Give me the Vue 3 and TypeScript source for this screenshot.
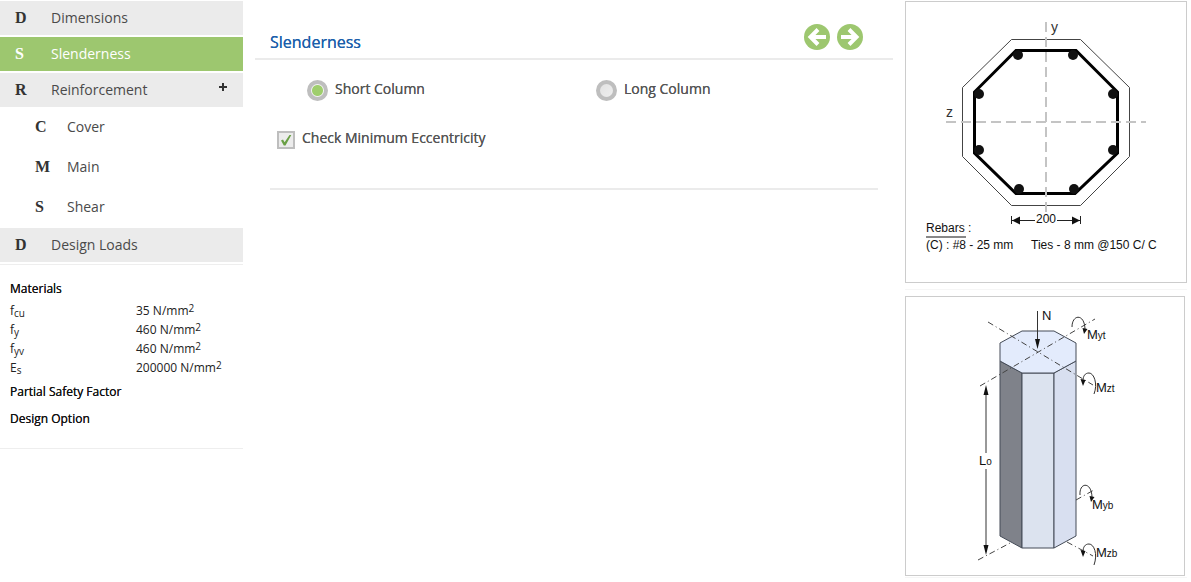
<script setup lang="ts">
import { ref } from 'vue'

interface NavItem {
  key: string
  letter: string
  label: string
  children?: { letter: string; label: string }[]
}

const active = ref('slenderness')
const columnType = ref<'short' | 'long'>('short')
const checkEccentricity = ref(true)
const expanded = ref(true)

const nav: NavItem[] = [
  { key: 'dimensions', letter: 'D', label: 'Dimensions' },
  { key: 'slenderness', letter: 'S', label: 'Slenderness' },
  {
    key: 'reinforcement',
    letter: 'R',
    label: 'Reinforcement',
    children: [
      { letter: 'C', label: 'Cover' },
      { letter: 'M', label: 'Main' },
      { letter: 'S', label: 'Shear' },
    ],
  },
  { key: 'loads', letter: 'D', label: 'Design Loads' },
]

const materials = [
  { symbol: 'f', sub: 'cu', value: 35 },
  { symbol: 'f', sub: 'y', value: 460 },
  { symbol: 'f', sub: 'yv', value: 460 },
  { symbol: 'E', sub: 's', value: 200000 },
]

const rebars = [
  [112, 53], [167, 53], [207, 92], [207, 148],
  [168, 187], [113, 187], [73, 148], [73, 92],
]

function select(item: NavItem) {
  if (item.children) expanded.value = !expanded.value
  else active.value = item.key
}
</script>

<template>
  <div class="page">
    <aside class="sidebar">
      <nav>
        <ul class="nav">
          <li v-for="item in nav" :key="item.key">
            <a
              href="#"
              class="nav-link"
              :class="{ active: active === item.key }"
              @click.prevent="select(item)"
            >
              <span class="letter">{{ item.letter }}</span>
              <span class="label">{{ item.label }}</span>
              <svg v-if="item.children" class="plus" viewBox="0 0 8 8" aria-hidden="true">
                <path d="M4 0V8M0 4H8" />
              </svg>
            </a>
            <ul v-if="item.children && expanded" class="subnav">
              <li v-for="child in item.children" :key="child.label">
                <a href="#" class="sub-link" @click.prevent>
                  <span class="letter">{{ child.letter }}</span>
                  <span class="label">{{ child.label }}</span>
                </a>
              </li>
            </ul>
          </li>
        </ul>
      </nav>
      <section class="summary">
        <h2>Materials</h2>
        <table>
          <tbody>
            <tr v-for="m in materials" :key="m.sub">
              <th scope="row">{{ m.symbol }}<sub>{{ m.sub }}</sub></th>
              <td>{{ m.value }} N/mm<sup>2</sup></td>
            </tr>
          </tbody>
        </table>
        <h2>Partial Safety Factor</h2>
        <h2>Design Option</h2>
      </section>
    </aside>

    <main class="content">
      <header class="title-bar">
        <h1>Slenderness</h1>
        <div class="pager">
          <button type="button" aria-label="Previous">
            <svg viewBox="0 0 26 26" aria-hidden="true">
              <circle cx="13" cy="13" r="13" />
              <path d="M22 13H8M14 5.500L6.500 13L14 20.500" />
            </svg>
          </button>
          <button type="button" aria-label="Next">
            <svg viewBox="0 0 26 26" aria-hidden="true">
              <circle cx="13" cy="13" r="13" />
              <path d="M4 13H18M12 5.500L19.500 13L12 20.500" />
            </svg>
          </button>
        </div>
      </header>
      <form class="options" @submit.prevent>
        <div class="radios">
          <label>
            <input v-model="columnType" type="radio" name="column" value="short" />
            <span class="caption">Short Column</span>
          </label>
          <label>
            <input v-model="columnType" type="radio" name="column" value="long" />
            <span class="caption">Long Column</span>
          </label>
        </div>
        <label class="check">
          <span class="box">
            <input v-model="checkEccentricity" type="checkbox" />
            <svg v-if="checkEccentricity" viewBox="0 0 12 12" aria-hidden="true">
              <path d="M1 6.500L3 5.500L4.600 8.300L9.500 1L11.300 1L5.500 11.500L3.800 11.500Z" />
            </svg>
          </span>
          <span class="caption">Check Minimum Eccentricity</span>
        </label>
      </form>
    </main>

    <aside class="figures">
      <div class="figure-row">
        <figure>
          <svg viewBox="0 0 280 280" role="img" aria-label="Column cross section">
            <polygon
              class="outline"
              points="105.5,37.5 174.5,37.5 223.5,85.5 223.5,154.5 174.5,203.5 105.5,203.5 56.5,154.5 56.5,85.5"
            />
            <polygon
              class="tie"
              points="110,48.500 170,48.500 211.5,90 211.5,151 169,191.500 110,191.500 68.5,151 68.5,90"
            />
            <circle v-for="([x, y], i) in rebars" :key="i" :cx="x" :cy="y" r="5" />
            <path class="axis" d="M140 20V212M40 120H240" />
            <text x="145" y="30" class="axis-name">y</text>
            <text x="40" y="115" class="axis-name">z</text>
            <path class="dim" d="M105.5 214V222M174.500 214V222M106 218.500H129M151 218.500H174" />
            <path d="M106 218.500L114 214.500V222.500ZM174 218.500L166 214.500V222.500Z" />
            <text x="130" y="221">200</text>
            <text x="20" y="230">Rebars :</text>
            <path class="underline" d="M20 235H60" />
            <text x="20" y="247">(C) : #8 - 25 mm</text>
            <text x="125" y="247">Ties - 8 mm @150 C/ C</text>
          </svg>
        </figure>
      </div>
      <div class="figure-row column-row">
        <figure>
          <svg viewBox="0 0 278 278" role="img" aria-label="Column axes and moments">
            <polygon class="face dark" points="94,64 116,76 116,251 94,239" />
            <polygon class="face front" points="116,76 148,76 148,251 116,251" />
            <polygon class="face side" points="148,76 170,64 170,239 148,251" />
            <polygon
              class="face top"
              points="116,34 148,34 170,46 170,64 148,76 116,76 94,64 94,46"
            />
            <path
              class="centre"
              d="M82 25L187 88M74 89L189 22M72 263L106 245M161 245L187 259M170 203L188 193"
            />
            <path class="line" d="M131.500 14V44M80 96V156M80 172V250" />
            <path d="M131.500 52L129 42H134ZM80 88L77.500 98H82.500ZM80 258L77.500 248H82.500Z" />
            <path
              class="line"
              d="M166 30C166 17 179 16 179 33M188 97C192 87 188 76 183 76C179 76 177 79 177 84M174 198C173 185 186 184 186 201M188 268C192 257 188 247 183 247C179 247 177 250 177 255"
            />
            <path
              d="M176.500 31L181.500 32L178 37ZM174.500 82L179.500 83L177 89ZM183.500 199L188.500 200L185 205ZM174.500 253L179.500 254L177 260Z"
            />
            <text x="136" y="23" class="force">N</text>
            <text x="73" y="168">L<tspan class="index">o</tspan></text>
            <text x="181" y="42">M<tspan class="index">yt</tspan></text>
            <text x="190" y="95">M<tspan class="index">zt</tspan></text>
            <text x="186" y="212">M<tspan class="index">yb</tspan></text>
            <text x="190" y="260">M<tspan class="index">zb</tspan></text>
          </svg>
        </figure>
      </div>
    </aside>
  </div>
</template>

<style>
body {
  margin: 0;
  background: #fff;
}
</style>

<style scoped>
.page {
  display: grid;
  grid-template-columns: 243px minmax(0, 1fr) 282px;
  column-gap: 12px;
  align-items: start;
  padding: 1px 4px 0 0;
  font-family: "Open Sans", sans-serif;
  font-size: 14px;
  color: #444;
}
ul {
  list-style: none;
  margin: 0;
  padding: 0;
}
a {
  color: #4a4a4a;
  text-decoration: none;
}
.letter {
  font: bold 16px "Liberation Serif", serif;
  color: #333;
}
.nav {
  display: grid;
  gap: 2px;
}
.nav-link {
  display: flex;
  align-items: center;
  height: 34px;
  padding: 0 16px 0 15px;
  background: #ebebeb;
}
.nav-link .letter {
  width: 36px;
}
.label {
  flex: 1;
  padding-bottom: 2px;
}
.nav-link.active {
  background: #9dc76f;
}
.active .letter,
.active .label {
  color: #fff;
}
.plus {
  width: 8px;
  height: 8px;
  margin-bottom: 6px;
  fill: none;
  stroke: #333;
  stroke-width: 2;
}
.subnav {
  display: grid;
  margin-bottom: -1px;
}
.sub-link {
  display: flex;
  align-items: center;
  height: 40px;
  padding-left: 35px;
}
.sub-link .letter {
  width: 32px;
}
.summary {
  margin-top: 2px;
  padding: 16px 10px 21px;
  border-top: 1px solid #eee;
  border-bottom: 1px solid #eee;
  font-size: 12px;
  color: #222;
}
.summary h2 {
  margin: 0 0 11px;
  font-size: 12px;
  line-height: 16px;
  font-weight: 400;
  color: #111;
  text-shadow: 0 0 0 currentColor;
}
.summary h2:first-child {
  margin-bottom: 4px;
}
.summary h2:last-child {
  margin-bottom: 0;
}
table {
  width: 100%;
  margin-bottom: 7px;
  border-collapse: collapse;
  table-layout: fixed;
}
th,
td {
  height: 19px;
  padding: 0;
  line-height: 19px;
  font-weight: 400;
  text-align: left;
}
th {
  width: 126px;
}
td {
  white-space: nowrap;
}
sub,
sup {
  font-size: 10px;
  line-height: 0;
}
sup {
  vertical-align: 3px;
}
sub {
  vertical-align: -2px;
}
.title-bar {
  display: flex;
  align-items: center;
  justify-content: space-between;
  height: 57px;
  padding: 0 30px 0 15px;
  border-bottom: 2px solid #ebebeb;
}
h1 {
  margin: 24px 0 0;
  font-size: 16px;
  line-height: 22px;
  font-weight: 400;
  color: #1b5fab;
  text-shadow: 0 0 0 currentColor;
}
.pager {
  display: flex;
  gap: 7px;
  margin-top: 15px;
}
.pager button {
  width: 26px;
  height: 26px;
  padding: 0;
  border: 0;
  background: none;
  cursor: pointer;
}
.pager svg {
  display: block;
}
.pager circle {
  fill: #9dc76f;
}
.pager path {
  fill: none;
  stroke: #fff;
  stroke-width: 4;
}
.options {
  margin: 0 15px;
  padding: 20px 0 38px;
  border-bottom: 2px solid #ebebeb;
  color: #555;
}
.radios {
  display: grid;
  grid-template-columns: 289px 1fr;
  margin-left: 37px;
}
label {
  display: flex;
  align-items: center;
  line-height: 18px;
}
.caption {
  padding-bottom: 3px;
  text-shadow: 0 0 0 currentColor;
}
input {
  appearance: none;
  box-sizing: border-box;
  margin: 0;
}
input[type="radio"] {
  width: 21px;
  height: 21px;
  margin-right: 7px;
  border: 4px solid #bebebe;
  border-radius: 50%;
  background: linear-gradient(135deg, #e2e2e2, #eee);
}
input[type="radio"]:checked {
  background: radial-gradient(circle, #9fce6d 5px, #f4f4f4 6px);
}
.check {
  margin: 28px 0 0 7px;
}
.box {
  display: grid;
  margin-right: 7px;
}
.box > * {
  grid-area: 1 / 1;
  place-self: center;
}
.box input {
  width: 18px;
  height: 18px;
  border: 2px solid #bebebe;
  background: #ececec;
}
.box svg {
  width: 12px;
  height: 12px;
  fill: #6aa045;
  pointer-events: none;
}
.figures {
  display: grid;
  gap: 6px;
}
.figure-row {
  padding-bottom: 6px;
  border-bottom: 1px solid #f6f6f6;
}
.column-row {
  padding: 0 2px 1px 0;
}
figure {
  margin: 0;
  border: 1px solid #ccc;
}
figure svg {
  display: block;
  width: 100%;
  font: 12px "Liberation Sans", sans-serif;
  fill: #111;
}
.outline {
  fill: none;
  stroke: #444;
}
.tie {
  fill: none;
  stroke: #000;
  stroke-width: 3;
}
.axis {
  fill: none;
  stroke: #c4c4c4;
  stroke-width: 2;
  stroke-dasharray: 10 5;
}
.axis-name {
  font-size: 14px;
  fill: #333;
}
.dim {
  stroke: #222;
}
.underline {
  stroke: #888;
  stroke-width: 2;
}
.face {
  stroke: #444b57;
  stroke-linejoin: round;
}
.dark {
  fill: #7f828a;
}
.front {
  fill: #dce3ef;
}
.side {
  fill: #d8dff0;
}
.top {
  fill: #e3ebfc;
}
.centre {
  fill: none;
  stroke: #444;
  stroke-dasharray: 6 3 1 3;
}
.line {
  fill: none;
  stroke: #333;
}
.column-row text {
  font-size: 13px;
}
.column-row .index {
  font-size: 10px;
}
</style>
